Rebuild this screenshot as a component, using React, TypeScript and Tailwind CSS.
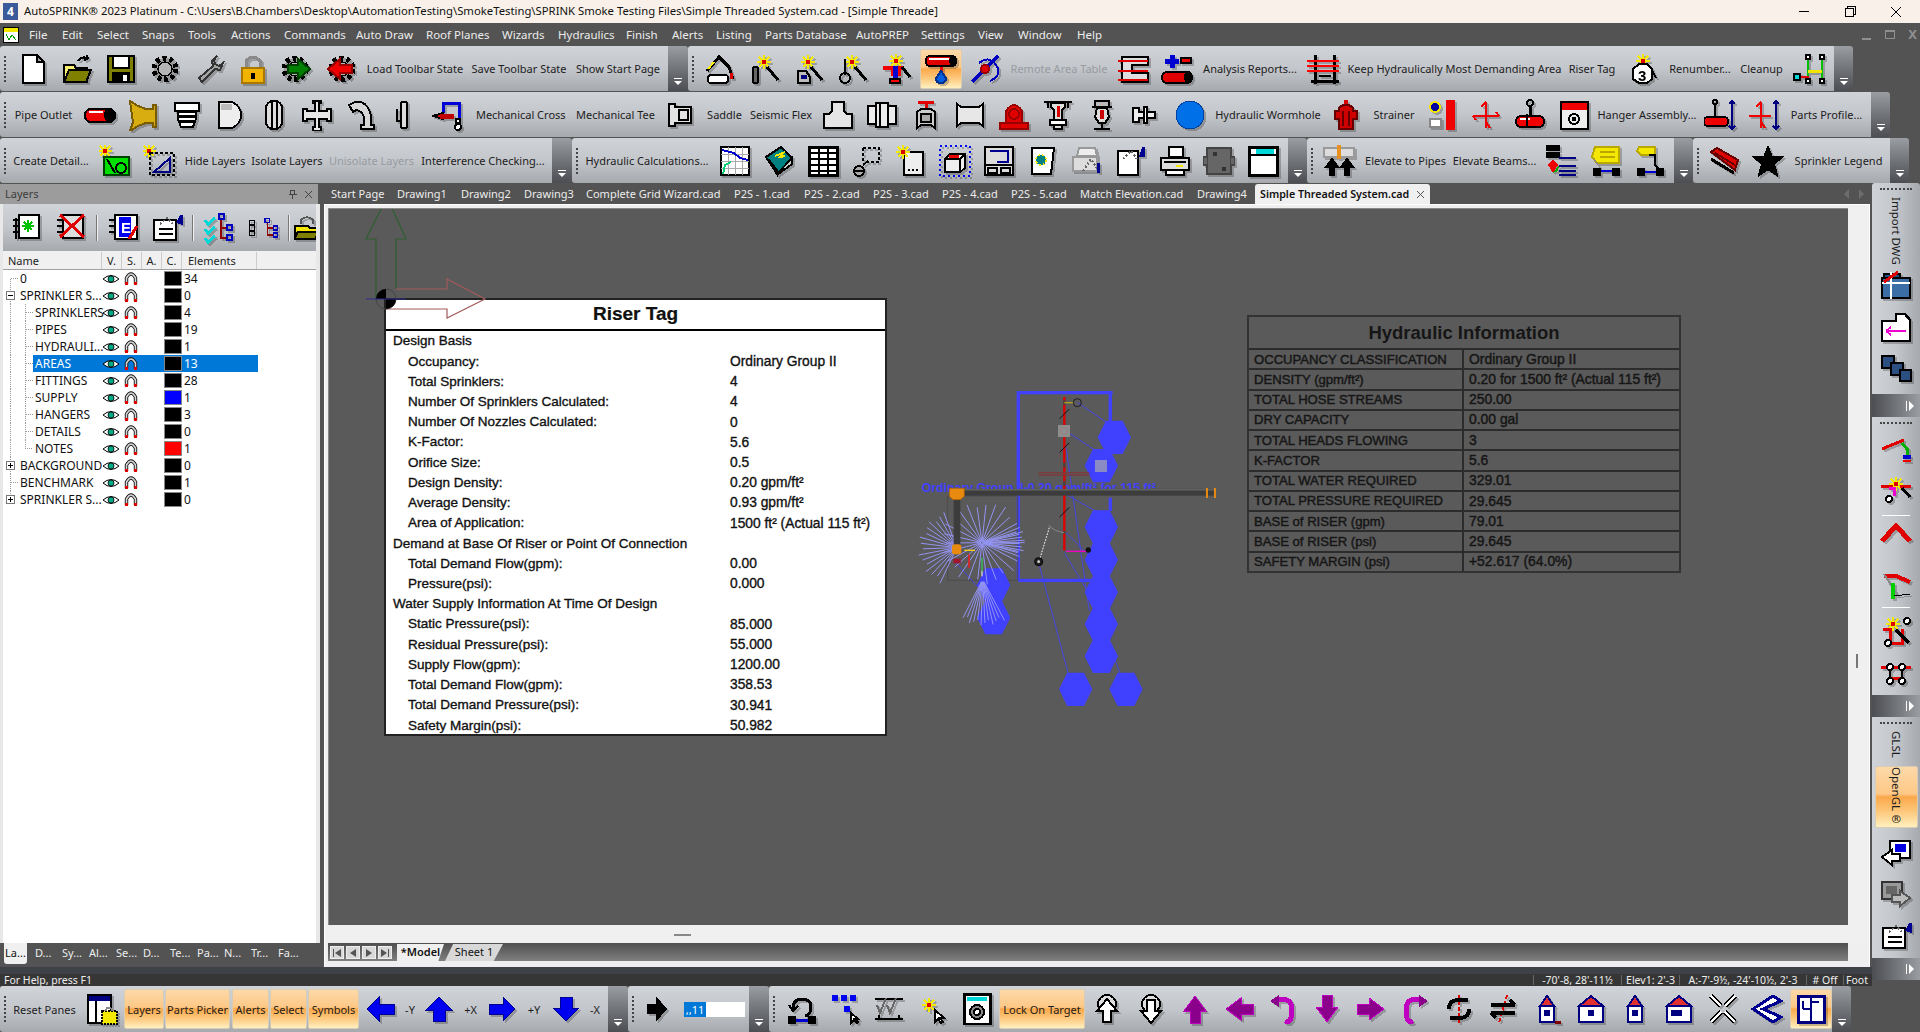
import type { ReactNode } from "react";
import clsx from "clsx";

const S = ({ c, children }: { c?: string; children: ReactNode }) => (
  <svg viewBox="0 0 32 32" width="32" height="32" fill="none" stroke="#000" strokeWidth="2" shapeRendering="crispEdges" className={clsx("drop-shadow-[2px_2px_0_rgba(0,0,0,0.22)]", c)}>
    {children}
  </svg>
);

const gear = (
  <>
    <circle cx="14" cy="16" r="11" fill="#9a9a9a" stroke="#000" strokeWidth="5" strokeDasharray="4 3" />
    <circle cx="14" cy="16" r="7" fill="#b5b5b5" stroke="#000" strokeWidth="1.5" />
  </>
);
const spark = (x: number, y: number) => (
  <g stroke="#f5ea00" strokeWidth="2">
    <path d={`M${x - 7} ${y}h14M${x} ${y - 7}v14M${x - 5} ${y - 5}l10 10M${x + 5} ${y - 5}l-10 10`} />
    <rect x={x - 2} y={y - 2} width="4" height="4" fill="#d00" stroke="none" />
  </g>
);
const pipe = (y = 20, x = 4, w = 26) => (
  <>
    <rect x={x} y={y} width={w} height="10" rx="4" fill="#e00000" />
    <path d={`M${x + 3} ${y + 3}h${w - 10}`} stroke="#fff" strokeWidth="2" />
    <ellipse cx={x + w - 3} cy={y + 5} rx="3" ry="4" fill="#000" />
  </>
);
const house = (roof: string, wide: boolean, foot?: boolean) => (
  <>
    <path d={wide ? "M4 13L16 3l12 10v16H4z" : "M9 13l7-10 7 10v16H9z"} fill="#fff" stroke="#000080" />
    <path d={wide ? "M4 13L16 3l12 10z" : "M9 13l7-10 7 10z"} fill={roof} stroke="#000080" />
    <rect x="13" y="17" width="6" height="6" fill="#000080" stroke="none" />
    {foot && <path d="M24 29h6" stroke="#800000" strokeWidth="3" />}
  </>
);

const icons: Record<string, ReactNode> = {
  doc: <path d="M6 2h14l7 7v21H6zM20 2v7h7" fill="#fff" />,
  open: (<><path d="M3 12h10l2 3h11v14H3z" fill="#f7ef70" /><path d="M3 29l5-12h22l-5 12z" fill="#808000" /><path d="M17 8q5-6 10-2m0 0l-1-4m1 4l-4 1" /></>),
  save: (<><rect x="3" y="3" width="26" height="26" fill="#808000" /><rect x="8" y="3" width="16" height="12" fill="#fff" /><rect x="8" y="20" width="16" height="9" fill="#000" /><rect x="18" y="22" width="4" height="6" fill="#fff" stroke="none" /></>),
  gear: <g transform="translate(2 0)">{gear}</g>,
  wrench: <path d="M24 3l-5 5 1 5L6 25l3 4 13-13 5 1 3-7-4 3-4-2-1-4z" fill="#a5a5a5" stroke="#333" />,
  lock: (<><path d="M9 15V8q7-8 14 0v7" stroke="#8a8a8a" strokeWidth="3" /><rect x="5" y="15" width="22" height="15" fill="#f2b400" stroke="#a87800" /><rect x="14" y="20" width="4" height="6" fill="#000" stroke="none" /></>),
  gearGreen: (<><g transform="translate(0 0)">{gear}</g><path d="M7 12h10V6l12 10-12 10v-6H7z" fill="#008000" stroke="#004000" /></>),
  gearRed: (<><g transform="translate(3 0)">{gear}</g><path d="M27 12H15V6L3 16l12 10v-6h12z" fill="#f00000" stroke="#900" /></>),
  arch: (<><path d="M2 18L14 4l10 10 4 12" stroke="#000" strokeWidth="3" /><path d="M3 16l6-7" stroke="#fff200" /><rect x="3" y="22" width="20" height="8" rx="3" fill="#fff" /><path d="M26 20v6" stroke="#d00" strokeWidth="3" /></>),
  wizA: (<>{spark(15, 9)}<rect x="4" y="14" width="5" height="16" rx="2" fill="#666" /><path d="M18 14l11 13" strokeWidth="3" /></>),
  wizB: (<>{spark(15, 9)}<path d="M5 18h8l4 6v6H5z" fill="#bbb" /><rect x="8" y="22" width="6" height="4" fill="#000080" stroke="none" /><path d="M18 14l11 13" strokeWidth="3" /></>),
  wizC: (<>{spark(15, 9)}<path d="M8 6v16" /><circle cx="8" cy="25" r="5" /><path d="M18 14l11 13" strokeWidth="3" /></>),
  wizD: (<>{spark(15, 8)}<path d="M2 15h10v6h6v-6h4" stroke="#f00000" strokeWidth="4" /><path d="M14 13v12" stroke="#0000d0" strokeWidth="5" /><rect x="9" y="26" width="10" height="4" fill="#f00" /><path d="M21 14l8 10" strokeWidth="3" /></>),
  pipeDrop: (<>{pipe(3, 1, 30)}<path d="M16 14v5" stroke="#e00" strokeWidth="3" /><path d="M16 18l5 7q0 5-5 5t-5-5z" fill="#0060e0" stroke="#003090" /></>),
  ringBlue: (<><path d="M3 29L29 3" stroke="#0000c0" strokeWidth="3" /><path d="M10 10q10-8 17 2t-6 16" stroke="#0000c0" strokeWidth="2" /><circle cx="16" cy="16" r="4" fill="#e00000" stroke="#900" /></>),
  areaTable: (<><path d="M5 4h26v8H15v8h16v9H5z" fill="#ddd" /><path d="M1 8h30M1 18h30M1 27h30" stroke="#e00000" strokeWidth="2" /></>),
  plusPipe: (<><path d="M4 8h14M11 2v13" stroke="#0000d0" strokeWidth="5" /><rect x="20" y="5" width="10" height="5" fill="#e00" /><rect x="1" y="19" width="30" height="11" rx="5" fill="#e00000" /><ellipse cx="27" cy="24" rx="3" ry="5" fill="#000" /></>),
  keep: (<><path d="M8 2v29M27 2v29M4 28h28" strokeWidth="3" /><path d="M0 8h32M0 13h32M0 18h32" stroke="#f00" strokeWidth="2" /><path d="M12 23h12" /></>),
  renum: (<>{spark(17, 8)}<path d="M7 16l6-5h8l5 5v10l-5 4h-8l-6-4z" fill="#fff" /><text x="12" y="28" fontSize="15" fontWeight="700" fill="#000" stroke="none" fontFamily="Liberation Sans">3</text><path d="M24 13l6 12" /></>),
  net: (<><path d="M15 3v26M29 3v26" stroke="#00c000" /><path d="M15 18h14" stroke="#f2e600" strokeWidth="3" /><path d="M4 24h12" stroke="#e00000" strokeWidth="2" /><rect x="1" y="21" width="6" height="6" fill="#00d8d8" /><rect x="13" y="2" width="4" height="4" fill="#fff" /><rect x="27" y="2" width="4" height="4" fill="#fff" /><rect x="13" y="26" width="4" height="4" fill="#fff" /><rect x="27" y="26" width="4" height="4" fill="#fff" /></>),
  redPipe: (<><rect x="1" y="10" width="30" height="13" rx="6" fill="#f00000" /><path d="M5 13h14" stroke="#fff" /><ellipse cx="25" cy="16" rx="4" ry="6" fill="#000" /></>),
  yellowFit: <path d="M3 2l8 5 8 3h7V6h3v22h-3v-4h-7l-8 3-8 5 3-9-1-7z" fill="#d8ad10" stroke="#7a5c00" />,
  plug: (<><path d="M4 4h24v8h-3v8l-3 8H10l-3-8v-8H4z" fill="#fff" /><path d="M7 12h18M7 17h18M9 22h14" strokeWidth="3" /></>),
  cap: (<><path d="M5 3h13q9 4 9 13t-9 13H5z" fill="#eee" /><rect x="7" y="5" width="11" height="6" fill="#bbb" stroke="none" /></>),
  coupling: (<><rect x="8" y="2" width="16" height="28" rx="7" fill="#ddd" /><path d="M14 3v26M19 3v26" /></>),
  cross: <path d="M12 2h8v2h-2v8h8v-2h4v12h-4v-2h-8v8h2v4h-8v-4h2v-8H6v2H2V10h4v2h8V4h-2z" fill="#e8e8e8" />,
  elbow: <path d="M4 6l6-3h6q8 3 10 14v9h3v4H16v-4h3v-8q-2-6-8-7l-3 2z" fill="#d6d6d6" />,
  flange: (<><rect x="13" y="3" width="6" height="26" rx="2" fill="#ddd" /><path d="M9 10v12h4" fill="#aaa" /></>),
  hangBlue: (<><path d="M11 14V4h16v16" stroke="#0000d8" strokeWidth="3" /><path d="M1 17l10-3v6z" fill="#e00000" /><rect x="8" y="15" width="14" height="5" fill="#c00000" stroke="none" /><rect x="24" y="20" width="4" height="4" fill="#fff" /><circle cx="26" cy="28" r="3" fill="#fff" /></>),
  socket: <path d="M4 5h6v3h16v16H10v3H4zM14 11h9v10h-9z" fill="#e3e3e3" />,
  tee: <path d="M10 3h12v9l3 3h5v14H2V15h5l3-3z" fill="#e5e5e5" />,
  union: <path d="M2 7h8V4h12v3h8v18h-8v3H10v-3H2zM10 7v18M22 7v18M14 4v24" fill="#ececec" />,
  valve: (<><path d="M8 3h16M16 3v7" stroke="#e00000" strokeWidth="3" /><path d="M7 13l4-3h10l4 3v16l-4-3H11l-4 3z" fill="#ccc" /><rect x="11" y="15" width="10" height="8" fill="#aaa" /></>),
  nipple: <path d="M3 5l4 3h18l4-3v22l-4-3H7l-4 3z" fill="#e7e7e7" />,
  pump: (<><path d="M8 24V12q8-12 16 0v12z" fill="#e00000" stroke="#900" /><circle cx="16" cy="15" r="5" stroke="#900" /><rect x="2" y="24" width="28" height="6" fill="#e00000" stroke="#900" /></>),
  spr1: (<><path d="M2 3h28M6 3v6M26 3v6" /><path d="M9 4h14v4l-3 3v10h-8V11L9 8z" fill="#ddd" /><rect x="15" y="7" width="3" height="11" fill="#d00" stroke="none" /><rect x="8" y="21" width="16" height="5" fill="#fff" /><path d="M12 26h8v4h-8z" fill="#ddd" /></>),
  spr2: (<><rect x="9" y="2" width="14" height="6" fill="#bbb" /><path d="M6 8h20M11 9l-2 9 4 6h6l4-6-2-9z" fill="#ddd" /><rect x="14" y="11" width="4" height="9" fill="#c00" stroke="none" /><path d="M16 24v5M8 30h16" /></>),
  tap: (<><path d="M3 9v14h6v-4h16v-6H9V9z" fill="#eee" /><path d="M14 8v16h3V8z" fill="#fff" /></>),
  ball: <circle cx="16" cy="16" r="14" fill="#0070e8" stroke="#0040a0" strokeWidth="1" />,
  hydrant: (<><rect x="14" y="1" width="4" height="4" fill="#d00" stroke="none" /><path d="M9 9q7-7 14 0v3h4v8h-4v10H9V20H5v-8h4z" fill="#d00000" stroke="#600" /><path d="M12 12h2v15h-2zM18 12h2v15h-2z" fill="#600" stroke="none" /></>),
  strainer: (<><rect x="20" y="1" width="9" height="30" fill="#f00000" stroke="none" /><circle cx="9" cy="8" r="5" fill="#0000a0" stroke="#f2e600" /><path d="M4 20h11v8H4z" fill="#fff" stroke="#888" /></>),
  redCross: <path d="M16 3v26M3 17h26M11 8l5-5M20 29l-4-6M6 21l-3-4M26 13l3 4" stroke="#f00000" strokeWidth="2" />,
  hanger: (<><circle cx="16" cy="4" r="3" /><path d="M16 7v13" strokeWidth="3" /><rect x="2" y="17" width="28" height="11" rx="5" fill="#f00000" /><path d="M6 20h10" stroke="#fff" /><path d="M13 15v14" /></>),
  boxRed: (<><rect x="3" y="3" width="27" height="27" fill="#eee" /><rect x="4" y="4" width="25" height="7" fill="#f00000" stroke="none" /><circle cx="16" cy="20" r="5" /><rect x="15" y="19" width="2" height="2" fill="#000" /></>),
  hanger2: (<><circle cx="11" cy="3" r="2" /><path d="M11 4v14" strokeWidth="2" /><rect x="0" y="18" width="24" height="9" rx="4" fill="#f00000" /><path d="M28 2v28M25 5l3-3 3 3M25 27l3 3 3-3" stroke="#000080" /></>),
  redCross2: (<><path d="M13 3v26M1 17h22M8 8l5-5M17 29l-4-6" stroke="#f00000" /><path d="M28 2v28M25 5l3-3 3 3M25 27l3 3 3-3" stroke="#000080" /></>),
  detGreen: (<>{spark(6, 6)}<rect x="5" y="12" width="25" height="18" fill="#00e000" stroke="#004000" /><path d="M8 14l8 14" /><circle cx="22" cy="23" r="5" /></>),
  detTri: (<>{spark(6, 6)}<rect x="7" y="8" width="24" height="22" strokeDasharray="3 2" /><path d="M11 27l16-14v14z" stroke="#000080" /></>),
  chart: (<><rect x="2" y="2" width="28" height="28" fill="#fff" /><path d="M2 9h28M2 16h28M2 23h28M9 2v28M16 2v28M23 2v28" stroke="#aaa" strokeWidth="1" /><path d="M3 5l12 3 6 5 8 2" stroke="#0000d0" /><path d="M4 29l2-9 6-3" stroke="#00d070" /></>),
  book: (<><path d="M3 12L18 2l11 11-15 16z" fill="#008080" /><path d="M3 12l11 17v-4L5 14" fill="#fff" /><path d="M12 11l8-3-3 4 5-1" stroke="#f5e800" /><path d="M14 29l15-16v6L14 30" fill="#ccc" /></>),
  grid: (<><rect x="2" y="2" width="28" height="28" fill="#fff" strokeWidth="3" /><path d="M2 8h28M2 14h28M2 20h28M2 26h28M12 2v28M21 2v28" strokeWidth="2" /></>),
  lasso: (<><path d="M12 3h16v14H16M12 3v15" strokeDasharray="3 2" /><circle cx="8" cy="26" r="5" fill="#aaa" /><path d="M3 26h10M12 20l5-4" /></>),
  sparkDoc: (<><rect x="9" y="7" width="19" height="23" fill="#eee" /><path d="M13 25h10" strokeDasharray="2 2" />{spark(8, 7)}</>),
  boxDot: (<><rect x="1" y="1" width="30" height="30" stroke="#0000f0" strokeDasharray="2 3" /><path d="M6 14l5-5h15v14l-5 4H6z" fill="#eee" /><path d="M6 14h15v13M21 14l5-5" /><rect x="10" y="10" width="10" height="3" fill="#e00" stroke="none" /></>),
  panel: (<><rect x="2" y="2" width="28" height="28" fill="#ddd" /><path d="M7 6h18v11H14" stroke="#000090" /><path d="M2 20h28" /><rect x="5" y="23" width="9" height="5" /><rect x="18" y="23" width="9" height="5" /></>),
  page: (<><path d="M5 3h22l-3 26H5z" fill="#fff" /><circle cx="14" cy="15" r="5" fill="#008080" stroke="#f5e800" strokeDasharray="2 2" /></>),
  ghost: (<><path d="M8 3h16l2 8H6z" fill="#eee" stroke="#999" /><path d="M2 12h24v14H2z" fill="#ddd" stroke="#999" /><path d="M12 26l8-12 8 12" stroke="#666" strokeDasharray="2 2" /><rect x="26" y="18" width="3" height="10" fill="#000090" stroke="none" /></>),
  docPen: (<><path d="M3 6h20v24H3z" fill="#fff" /><path d="M8 14l8-8 6 8" stroke="#666" strokeDasharray="2 2" /><path d="M24 12l3-10h3v10z" fill="#000090" stroke="none" /></>),
  printer: (<><path d="M10 2h14v10H10z" fill="#fff" /><path d="M2 13h28v12H2z" fill="#ddd" /><path d="M7 25h18v5H7z" fill="#fff" /><rect x="17" y="20" width="7" height="2" fill="#f5e800" stroke="none" /><path d="M5 17h22" /></>),
  block: (<><path d="M4 3h24v26H4z" fill="#666" stroke="#444" /><path d="M4 12H0v8h4M28 12h4v8h-4" fill="#666" stroke="#444" /><rect x="10" y="7" width="4" height="4" fill="#333" stroke="none" /><rect x="19" y="22" width="4" height="4" fill="#333" stroke="none" /></>),
  win: (<><rect x="2" y="2" width="28" height="28" fill="#fff" strokeWidth="3" /><rect x="9" y="4" width="18" height="5" fill="#00d8d8" stroke="none" /><path d="M2 10h28" /></>),
  elevUp: (<><rect x="1" y="3" width="30" height="9" fill="#ddd" stroke="#999" /><rect x="14" y="0" width="4" height="14" fill="#e89020" stroke="none" /><path d="M9 14l-6 8h4v8h4v-8h4zM24 14l-6 8h4v8h4v-8h4z" fill="#000" /></>),
  colors: (<><rect x="2" y="1" width="12" height="4" fill="#000" /><rect x="2" y="8" width="12" height="4" fill="#000" /><path d="M8 14l5 6-5 8-5-8z" fill="#e00" stroke="none" /><path d="M8 28l6-8-1 6z" fill="#00b000" stroke="none" /><path d="M14 13h17M14 21h17M14 26h17M14 30h17" stroke="#000080" /></>),
  tagY: (<><path d="M6 2h24v16H8l-5-6z" fill="#f5e800" stroke="#b8a800" /><path d="M11 7h15M11 12h15" stroke="#b8a800" /><path d="M5 14l9 13" stroke="#888" strokeWidth="1" /><path d="M8 26h18" stroke="#0000d0" /><rect x="5" y="24" width="6" height="6" fill="#000" /><rect x="24" y="24" width="6" height="6" fill="#000" /></>),
  tagS: (<><path d="M6 2h16v8H8l-4-4z" fill="#f5e800" stroke="#b8a800" /><path d="M16 10h6v10l5 5" /><path d="M12 27h14" stroke="#0000d0" /><rect x="5" y="24" width="6" height="6" fill="#000" /><rect x="24" y="24" width="6" height="6" fill="#000" /></>),
  beam: (<><path d="M3 7l6-4 21 12-3 10z" fill="#e00000" stroke="#600" /><path d="M3 14L26 28" strokeWidth="3" /><path d="M7 8l20 12" stroke="#600" /></>),
  star: <path d="M16 2l4 10h10l-8 7 3 11-9-6-9 6 3-11-8-7h10z" fill="#000" />,
  arL: <path d="M14 4v7h15v10H14v7L2 16z" fill="#0000f0" stroke="#000090" strokeWidth="1" />,
  arU: <path d="M16 4l13 13h-7v11H10V17H3z" fill="#0000f0" stroke="#000090" strokeWidth="1" />,
  arR: <path d="M17 4v7H3v10h14v7l12-12z" fill="#0000f0" stroke="#000090" strokeWidth="1" />,
  arD: <path d="M16 28L3 15h7V4h12v11h7z" fill="#0000f0" stroke="#000090" strokeWidth="1" />,
  arB: <path d="M16 6v6H7v8h9v6l9-10z" fill="#000" />,
  reset: (<><rect x="2" y="2" width="23" height="28" fill="#fff" /><rect x="3" y="3" width="21" height="5" fill="#000080" stroke="none" /><path d="M10 8v22" /><rect x="16" y="18" width="15" height="13" fill="#f5e800" strokeDasharray="2 1" /><path d="M19 18q4-7 8 0" stroke="#888" /></>),
  undoH: (<><path d="M8 16q0-10 9-10t9 8-6 9" strokeWidth="3" /><path d="M4 12l4 6 5-5" strokeWidth="2" /><path d="M8 27h18" stroke="#0000d0" strokeWidth="3" /><rect x="4" y="24" width="6" height="6" fill="#000" /><rect x="24" y="24" width="6" height="6" fill="#000" /></>),
  dots: (<><path d="M3 2h6v6H3zM12 2h6v6h-6zM21 2h6v6h-6zM15 13h6v6h-6z" fill="#0000f0" stroke="none" /><path d="M22 20v10l3-3 3 3 1-1-3-3h3z" fill="#fff" /></>),
  checks: (<><path d="M2 6h28M2 26h28M6 26v-4M26 26v-4" /><path d="M4 12l3 8 6-15M14 12l3 8 6-15" stroke="#666" /></>),
  sparkPtr: (<>{spark(12, 12)}<path d="M18 17v12l3-3 3 4 2-1-3-4h4z" fill="#fff" /></>),
  winRing: (<><rect x="3" y="1" width="26" height="30" fill="#fff" strokeWidth="3" /><rect x="6" y="4" width="20" height="4" fill="#00d8d8" stroke="none" /><circle cx="16" cy="19" r="7" fill="#888" /><circle cx="16" cy="19" r="3" fill="#fff" /></>),
  zoomUp: (<><circle cx="16" cy="11" r="9" fill="#ddd" /><path d="M16 6l-10 12h6v11h8V18h6z" fill="#fff" /></>),
  zoomDn: (<><circle cx="16" cy="11" r="9" fill="#ddd" /><path d="M16 30L6 18h6V7h8v11h6z" fill="#fff" /></>),
  pU: <path d="M16 3l11 15h-6v12H11V18H5z" fill="#8a008a" stroke="#c000c0" strokeWidth="1" />,
  pL: <path d="M3 16l15-11v6h12v10H18v6z" fill="#8a008a" stroke="#c000c0" strokeWidth="1" />,
  pD: <path d="M16 29L5 14h6V2h10v12h6z" fill="#8a008a" stroke="#c000c0" strokeWidth="1" />,
  pR: <path d="M29 16L14 5v6H2v10h12v6z" fill="#8a008a" stroke="#c000c0" strokeWidth="1" />,
  pUndo: (<><path d="M9 7q16-4 16 10t-7 11" stroke="#c000c0" strokeWidth="5" /><path d="M3 8l9-6v12z" fill="#8a008a" stroke="none" /></>),
  pRedo: (<><path d="M23 7Q7 3 7 17t7 11" stroke="#c000c0" strokeWidth="5" /><path d="M29 8l-9-6v12z" fill="#8a008a" stroke="none" /></>),
  rotA: (<><path d="M16 2v28" stroke="#e00000" strokeWidth="2" strokeDasharray="4 2" /><path d="M6 16q0-9 10-9h9M26 16q0 9-10 9H7" strokeWidth="4" /></>),
  rotB: (<><path d="M20 2L12 30" stroke="#e00000" strokeWidth="2" strokeDasharray="4 2" /><path d="M4 12h24M28 12l-5-5M4 20h24M4 20l5 5" strokeWidth="4" /></>),
  hA: <g>{house("#e03030", false, true)}</g>,
  hB: <g>{house("#e03030", true)}</g>,
  hC: <g>{house("#e03030", false)}</g>,
  hD: (<>{house("#e03030", true)}<rect x="8" y="17" width="5" height="6" fill="#000080" stroke="none" /></>),
  fit: (<><path d="M4 3l10 10M28 3L18 13M4 29l10-10M28 29L18 19" stroke="#000" strokeWidth="5" /><path d="M4 3l10 10M28 3L18 13M4 29l10-10M28 29L18 19" stroke="#fff" strokeWidth="2" /></>),
  diamond: (<><path d="M2 16L22 3l8 5-18 8 18 8-8 5z" fill="#fff" stroke="#000090" strokeWidth="3" /></>),
  sheets: (<><rect x="3" y="3" width="26" height="26" fill="#fff" stroke="#000080" strokeWidth="3" /><path d="M16 3v26M8 16h8M16 9h8M8 8v8" stroke="#000080" strokeWidth="2" /></>),
  vBlue: (<><path d="M4 4h16v5H4z" fill="#205080" /><path d="M2 8h28v20H2z" fill="#3a6ea5" /><path d="M2 13h28M11 2v27" stroke="#fff" /><path d="M4 12L18 2" stroke="#e00000" strokeWidth="3" /></>),
  vDocs: (<><path d="M2 10h14V3h9l5 6v21H2z" fill="#fff" strokeWidth="2.5" /><path d="M6 20h20M6 20l5-4M6 20l5 4" stroke="#f000d0" /></>),
  vLink: (<><rect x="2" y="4" width="12" height="12" fill="#2a4f80" /><rect x="11" y="11" width="12" height="12" fill="#2a4f80" /><rect x="20" y="18" width="11" height="11" fill="#2a4f80" /></>),
  vRoof: (<><path d="M2 16l12-5 10-4" stroke="#e00000" strokeWidth="3" /><path d="M22 10l5 6v8" stroke="#00b000" strokeWidth="3" /><rect x="23" y="22" width="8" height="4" fill="#0000d0" stroke="none" /><path d="M23 28h8" stroke="#e00" /></>),
  vRoofW: (<>{spark(16, 10)}<path d="M1 12h12M20 12h11" stroke="#e00000" strokeWidth="3" /><path d="M9 14h5v8" stroke="#f000d0" strokeWidth="3" /><circle cx="9" cy="25" r="3" fill="#fff" /><path d="M22 14l8 9" strokeWidth="3" /></>),
  vPeak: <path d="M2 24L16 9l14 15" stroke="#e00000" strokeWidth="5" />,
  vPeak2: (<><path d="M4 7h12l14 6" stroke="#e00000" strokeWidth="4" /><path d="M4 5l14 22" stroke="#888" /><path d="M13 14v16" stroke="#00d000" strokeWidth="4" /><path d="M14 27l16-2" strokeWidth="1" /></>),
  vWiz: (<>{spark(13, 8)}<path d="M3 13h7v14h12V13" stroke="#e00000" strokeWidth="3" /><circle cx="8" cy="27" r="3" fill="#fff" /><circle cx="27" cy="5" r="3" fill="#fff" /><path d="M16 14l13 13" strokeWidth="3" /></>),
  vLoop: (<><path d="M1 10h30M10 21h12" stroke="#e00000" strokeWidth="3" /><path d="M10 6v20M22 6v20" strokeWidth="2" /><circle cx="10" cy="10" r="3" fill="#fff" /><circle cx="22" cy="10" r="3" fill="#fff" /><circle cx="10" cy="24" r="3" fill="#fff" /><circle cx="22" cy="24" r="3" fill="#fff" /></>),
  vMon: (<><rect x="10" y="3" width="20" height="17" fill="#fff" /><rect x="15" y="6" width="11" height="8" fill="#0000e0" stroke="none" /><path d="M2 19l10-7v4h8v7h-8v4z" fill="#fff" /></>),
  vMonG: (<><rect x="2" y="3" width="20" height="17" fill="#999" stroke="#333" /><rect x="6" y="7" width="11" height="8" fill="#666" stroke="none" /><path d="M30 19l-10-7v4h-8v7h8v4z" fill="#bbb" stroke="#555" /></>),
  layNew: (<><path d="M8 3h20v23H8z" fill="#fff" /><path d="M5 6v21M2 8h6M2 14h6M2 20h6" /><path d="M17 8v12M11 14h12M13 10l8 8M21 10l-8 8" stroke="#00c000" /></>),
  layDel: (<><path d="M8 3h20v23H8z" fill="#ddd" /><path d="M2 8h6M2 14h6M2 20h6" /><path d="M5 3l24 22M29 3L5 25" stroke="#e00000" strokeWidth="3" /></>),
  layE: (<><path d="M8 3h22v24H8z" fill="#fff" /><path d="M2 8h6M2 14h6M2 20h6" /><rect x="12" y="5" width="12" height="20" fill="#0000f0" stroke="none" /><path d="M22 27L30 14" stroke="#e00000" strokeWidth="3" /><text x="14" y="21" fontSize="15" fontWeight="700" fill="#fff" stroke="none" fontFamily="Liberation Sans">E</text></>),
  layDoc: (<><path d="M3 8h22v20H3z" fill="#fff" /><path d="M9 12l7-6 6 6" stroke="#666" strokeDasharray="2 2" /><path d="M8 17h14M8 22h14" /><path d="M25 11l4-8h3v10z" fill="#000090" stroke="none" /></>),
  layChk: (<><path d="M2 8l3 4 7-6M2 17l3 4 7-6M2 26l3 4 7-6" stroke="#00d8d8" strokeWidth="3" /><path d="M18 6v20h6M18 16h6" stroke="#900000" /><rect x="16" y="2" width="5" height="5" stroke="#0000c0" /><rect x="24" y="13" width="5" height="5" stroke="#0000c0" /><rect x="24" y="23" width="5" height="5" stroke="#0000c0" /></>),
  layBox: (<><rect x="12" y="2" width="8" height="8" strokeWidth="2" /><rect x="12" y="12" width="8" height="8" strokeWidth="2" /><rect x="12" y="22" width="8" height="8" strokeWidth="2" /></>),
  layTree: (<><rect x="6" y="2" width="6" height="6" stroke="#0000c0" /><path d="M9 8v18h9M9 16h9" stroke="#900000" /><rect x="18" y="13" width="6" height="6" stroke="#0000c0" /><rect x="18" y="23" width="6" height="6" stroke="#0000c0" /></>),
  layOpen: (<><path d="M10 12V7q6-5 12 0v5" stroke="#555" /><path d="M3 14h14l2 2h8v12H3z" fill="#f5e800" /><path d="M6 20l-3 8h22l3-8z" fill="#808000" /></>),
};

const Ic = ({ n, w = "w-[44px]" }: { n: string; w?: string }) => (
  <div className={clsx("flex shrink-0 items-center justify-center", w)}>
    <S>{icons[n]}</S>
  </div>
);
const Tx = ({ w, off, children }: { w: string; off?: boolean; children: ReactNode }) => (
  <div className={clsx("shrink-0 whitespace-nowrap text-center text-[11px] leading-none", w, off ? "text-[#989ba0]" : "text-[#1c1c1c]")}>{children}</div>
);
const hlBg = "bg-[linear-gradient(#fdd9a8_0%,#fdc887_45%,#fba84a_50%,#fdc97e_75%,#fff0bf_100%)] border border-[#d8cdb4] rounded-[2px]";
const Hl = ({ w, children }: { w: string; children: ReactNode }) => (
  <div className={clsx("flex h-[40px] shrink-0 items-center justify-center whitespace-nowrap text-[11px] leading-none text-[#1c1c1c]", w, hlBg)}>{children}</div>
);
const Dots = ({ w }: { w: string }) => (
  <div className={clsx("flex h-full shrink-0 items-center pl-[4px]", w)}>
    <div className="h-[26px] border-l-2 border-dotted border-[#444]" />
  </div>
);
const Grip = ({ w = "w-[19px]" }: { w?: string }) => (
  <div className={clsx("relative flex shrink-0 flex-col items-center justify-end rounded-r-[3px] bg-linear-to-b from-[#9a9da2] to-[#4c4e53] pb-[6px]", w)}>
    <div className="mb-[2px] h-px w-[8px] bg-white" />
    <div className="h-0 w-0 border-x-[4px] border-t-[4px] border-x-transparent border-t-white" />
  </div>
);
const VGrip = ({ h }: { h: string }) => (
  <div className={clsx("flex items-center justify-end gap-[2px] bg-linear-to-r from-[#4c4e53] to-[#9a9da2] pr-[6px]", h)}>
    <div className="h-[10px] w-px bg-white" />
    <div className="h-0 w-0 border-y-[5px] border-l-[5px] border-y-transparent border-l-white" />
  </div>
);
const barBg = "bg-linear-to-b from-[#d0d3d8] via-[#c3c6cb] to-[#a6a9ae]";
const vBarBg = "bg-linear-to-r from-[#d0d3d8] via-[#c3c6cb] to-[#a6a9ae]";
const Seg = ({ w, lead, grip, children }: { w: string; lead: string; grip?: string; children: ReactNode }) => (
  <div className={clsx("flex h-full shrink-0", w)}>
    <div className={clsx("flex min-w-0 flex-1 items-center overflow-hidden rounded-l-[3px]", barBg)}>
      <Dots w={lead} />
      {children}
    </div>
    <Grip w={grip} />
  </div>
);

const menu = [
  ["File", "w-[33px]"], ["Edit", "w-[35px]"], ["Select", "w-[45px]"], ["Snaps", "w-[46px]"], ["Tools", "w-[43px]"],
  ["Actions", "w-[53px]"], ["Commands", "w-[72px]"], ["Auto Draw", "w-[70px]"], ["Roof Planes", "w-[76px]"], ["Wizards", "w-[56px]"],
  ["Hydraulics", "w-[68px]"], ["Finish", "w-[46px]"], ["Alerts", "w-[44px]"], ["Listing", "w-[49px]"], ["Parts Database", "w-[91px]"],
  ["AutoPREP", "w-[65px]"], ["Settings", "w-[57px]"], ["View", "w-[40px]"], ["Window", "w-[59px]"], ["Help", "w-[40px]"],
];
const docTabs = [
  ["Start Page", "w-[66px]"], ["Drawing1", "w-[64px]"], ["Drawing2", "w-[63px]"], ["Drawing3", "w-[62px]"], ["Complete Grid Wizard.cad", "w-[148px]"],
  ["P2S - 1.cad", "w-[70px]"], ["P2S - 2.cad", "w-[69px]"], ["P2S - 3.cad", "w-[69px]"], ["P2S - 4.cad", "w-[69px]"], ["P2S - 5.cad", "w-[69px]"],
  ["Match Elevation.cad", "w-[117px]"], ["Drawing4", "w-[58px]"],
];
const layers = [
  { name: "0", n: 34, c: "bg-black", t: "first" },
  { name: "SPRINKLER S...", n: 0, c: "bg-black", t: "minus" },
  { name: "SPRINKLERS", n: 4, c: "bg-black", t: "child" },
  { name: "PIPES", n: 19, c: "bg-black", t: "child" },
  { name: "HYDRAULI...", n: 1, c: "bg-black", t: "child" },
  { name: "AREAS", n: 13, c: "bg-black", t: "child", sel: true },
  { name: "FITTINGS", n: 28, c: "bg-black", t: "child" },
  { name: "SUPPLY", n: 1, c: "bg-[#0000ff]", t: "child" },
  { name: "HANGERS", n: 3, c: "bg-black", t: "child" },
  { name: "DETAILS", n: 0, c: "bg-black", t: "child" },
  { name: "NOTES", n: 1, c: "bg-[#ff0000]", t: "last" },
  { name: "BACKGROUND", n: 0, c: "bg-black", t: "plus" },
  { name: "BENCHMARK", n: 1, c: "bg-black", t: "root" },
  { name: "SPRINKLER S...", n: 0, c: "bg-black", t: "end" },
];
const riser: [string, string?][] = [
  ["Design Basis"],
  ["Occupancy:", "Ordinary Group II"],
  ["Total Sprinklers:", "4"],
  ["Number Of Sprinklers Calculated:", "4"],
  ["Number Of Nozzles Calculated:", "0"],
  ["K-Factor:", "5.6"],
  ["Orifice Size:", "0.5"],
  ["Design Density:", "0.20 gpm/ft²"],
  ["Average Density:", "0.93 gpm/ft²"],
  ["Area of Application:", "1500 ft² (Actual 115 ft²)"],
  ["Demand at Base Of Riser or Point Of Connection"],
  ["Total Demand Flow(gpm):", "0.00"],
  ["Pressure(psi):", "0.000"],
  ["Water Supply Information At Time Of Design"],
  ["Static Pressure(psi):", "85.000"],
  ["Residual Pressure(psi):", "55.000"],
  ["Supply Flow(gpm):", "1200.00"],
  ["Total Demand Flow(gpm):", "358.53"],
  ["Total Demand Pressure(psi):", "30.941"],
  ["Safety Margin(psi):", "50.982"],
];
const hydraulic = [
  ["OCCUPANCY CLASSIFICATION", "Ordinary Group II"],
  ["DENSITY (gpm/ft²)", "0.20 for 1500 ft² (Actual 115 ft²)"],
  ["TOTAL HOSE STREAMS", "250.00"],
  ["DRY CAPACITY", "0.00 gal"],
  ["TOTAL HEADS FLOWING", "3"],
  ["K-FACTOR", "5.6"],
  ["TOTAL WATER REQUIRED", "329.01"],
  ["TOTAL PRESSURE REQUIRED", "29.645"],
  ["BASE of RISER (gpm)", "79.01"],
  ["BASE of RISER (psi)", "29.645"],
  ["SAFETY MARGIN (psi)", "+52.617 (64.0%)"],
];
const hexes = [[640, 199], [601, 284], [601, 468], [601, 566], [601, 664], [601, 760], [601, 856], [524, 955], [675, 955], [278, 642], [278, 740]];
const ray = (cx: number, cy: number, r0: number, r: number, i: number, a: number) => {
  const t = (a * Math.PI) / 180;
  const rr = r - ((i * 37) % 22);
  return <line key={`${cx}-${i}`} x1={cx + r0 * Math.cos(t)} y1={cy + r0 * Math.sin(t)} x2={cx + rr * Math.cos(t)} y2={cy + rr * Math.sin(t)} />;
};

const TreeLines = ({ t }: { t: string }) => (
  <svg width="30" height="17" className="shrink-0" stroke="#999" strokeDasharray="1 1" fill="none" shapeRendering="crispEdges">
    {t === "first" && <path d="M7.5 8.5V17M7.5 8.5H15" />}
    {(t === "minus" || t === "plus") && <path d="M7.5 0V17" />}
    {t === "child" && <path d="M7.5 0V17M22.5 0V17M22.5 8.5H30" />}
    {t === "last" && <path d="M7.5 0V17M22.5 0V8.5H30" />}
    {t === "root" && <path d="M7.5 0V17M7.5 8.5H15" />}
    {t === "end" && <path d="M7.5 0V8" />}
    {(t === "minus" || t === "plus" || t === "end") && (
      <g strokeDasharray="none">
        <rect x="3.5" y="4.5" width="8" height="8" fill="#fff" stroke="#777" />
        <path d="M5 8.5h5" stroke="#000" />
        {t !== "minus" && <path d="M7.5 6v5" stroke="#000" />}
      </g>
    )}
  </svg>
);
const Eye = () => (
  <svg viewBox="0 0 16 10" width="16" height="10" className="shrink-0">
    <path d="M0 5q8-7 16 0q-8 7-16 0z" fill="#fff" stroke="#000" strokeWidth="1" />
    <circle cx="8" cy="5" r="3" fill="#00a884" stroke="#000" strokeWidth=".8" />
  </svg>
);
const Magnet = () => (
  <svg viewBox="0 0 14 14" width="14" height="14" fill="none" className="shrink-0">
    <path d="M2.5 12V6q4.5-8 9 0v6" stroke="#111" strokeWidth="3.4" />
    <path d="M2.5 12V6q4.5-8 9 0v6" stroke="#d4d4d4" strokeWidth="1.6" />
    <path d="M1 11.5h3M10 11.5h3" stroke="#e00000" strokeWidth="3" />
  </svg>
);
const Win = ({ children }: { children: ReactNode }) => (
  <div className="flex h-full w-[46px] items-center justify-center">{children}</div>
);
const NavBtn = ({ d }: { d: string }) => (
  <div className="flex h-[13px] w-[14px] items-center justify-center border border-[#eee] bg-[#d8d8d8]">
    <svg viewBox="0 0 8 8" width="8" height="8"><path d={d} fill="#555" /></svg>
  </div>
);
const Sep = ({ c }: { c: string }) => <div className={clsx("h-[26px] w-[2px] shrink-0 border-l border-[#777] bg-[#f0f0f0]", c)} />;

export default function App() {
  return (
    <div className="flex h-[1032px] w-[1920px] flex-col overflow-hidden bg-[#535353] font-['Noto_Sans','Liberation_Sans',sans-serif]">
      <div className="flex h-[23px] items-center bg-[#f9f1e9]">
        <div className="ml-[3px] flex h-[17px] w-[15px] items-center justify-center bg-[#3a5a9a] text-[12px] font-bold leading-none text-white">4</div>
        <div className="ml-[6px] whitespace-nowrap text-[11.3px] text-[#111]">AutoSPRINK® 2023 Platinum - C:\Users\B.Chambers\Desktop\AutomationTesting\SmokeTesting\SPRINK Smoke Testing Files\Simple Threaded System.cad - [Simple Threade]</div>
        <div className="ml-auto mr-px flex h-full">
          <Win><div className="h-px w-[10px] bg-black" /></Win>
          <Win><svg width="11" height="11" fill="none" stroke="#000" shapeRendering="crispEdges"><path d="M.5 2.5h8v8h-8zM2.5 2.5V.5h8v8H8.5" /></svg></Win>
          <Win><svg width="12" height="12" stroke="#000"><path d="M1 1l10 10M11 1L1 11" /></svg></Win>
        </div>
      </div>

      <div className="flex h-[23px] items-center text-[11.5px] text-[#ececec]">
        <div className="w-[29px] pl-[3px]">
          <svg width="16" height="16" stroke="#000" fill="#fff" shapeRendering="crispEdges"><rect x=".5" y=".5" width="15" height="15" /><rect x="1" y="1" width="14" height="4" fill="#f5e800" stroke="none" /><path d="M3 7l3 6 3-5 4 5" stroke="#00a000" fill="none" /></svg>
        </div>
        {menu.map(([t, w]) => (
          <div key={t} className={clsx("shrink-0 whitespace-nowrap", w)}>{t}</div>
        ))}
        <div className="ml-auto mr-[3px] flex w-[55px] items-center justify-between text-[#8f8f8f]">
          <div className="mt-[8px] h-[2px] w-[9px] bg-[#8f8f8f]" />
          <div className="h-[9px] w-[10px] border border-t-2 border-[#8f8f8f]" />
          <div className="text-[13px] font-bold leading-none">X</div>
        </div>
      </div>

      <div className="flex flex-col gap-px">
        <div className="flex h-[45px]">
          <Seg w="w-[688px]" lead="w-[11px]" grip="w-[20px]">
            {["doc", "open", "save", "gear", "wrench", "lock", "gearGreen", "gearRed"].map((n) => <Ic key={n} n={n} />)}
            <Tx w="w-[104px]">Load Toolbar State</Tx>
            <Tx w="w-[104px]">Save Toolbar State</Tx>
            <Tx w="w-[94px]">Show Start Page</Tx>
          </Seg>
          <Seg w="w-[1165px]" lead="w-[11px]">
            {["arch", "wizA", "wizB", "wizC", "wizD"].map((n) => <Ic key={n} n={n} />)}
            <div className={clsx("mx-px flex h-[40px] w-[42px] shrink-0 items-center justify-center", hlBg)}><S>{icons.pipeDrop}</S></div>
            <Ic n="ringBlue" />
            <Tx off w="w-[104px]">Remote Area Table</Tx>
            <Ic n="areaTable" />
            <Ic n="plusPipe" />
            <Tx w="w-[102px]">Analysis Reports...</Tx>
            <Ic n="keep" />
            <Tx w="w-[219px]">Keep Hydraulically Most Demanding Area</Tx>
            <Tx w="w-[56px]">Riser Tag</Tx>
            <Ic n="renum" />
            <Tx w="w-[72px]">Renumber...</Tx>
            <Tx w="w-[51px]">Cleanup</Tx>
            <Ic n="net" />
          </Seg>
        </div>

        <div className="flex h-[45px]">
          <Seg w="w-[1890px]" lead="w-[9px]">
            <Tx w="w-[69px]">Pipe Outlet</Tx>
            {["redPipe", "yellowFit", "plug", "cap", "coupling", "cross", "elbow", "flange", "hangBlue"].map((n) => <Ic key={n} n={n} w="w-[43.5px]" />)}
            <Tx w="w-[102.5px]">Mechanical Cross</Tx>
            <Tx w="w-[87px]">Mechanical Tee</Tx>
            <Ic n="socket" />
            <Tx w="w-[43px]">Saddle</Tx>
            <Tx w="w-[70px]">Seismic Flex</Tx>
            {["tee", "union", "valve", "nipple", "pump", "spr1", "spr2", "tap", "ball"].map((n) => <Ic key={n} n={n} />)}
            <Tx w="w-[112px]">Hydraulic Wormhole</Tx>
            <Ic n="hydrant" />
            <Tx w="w-[52px]">Strainer</Tx>
            {["strainer", "redCross", "hanger", "boxRed"].map((n) => <Ic key={n} n={n} />)}
            <Tx w="w-[102px]">Hanger Assembly...</Tx>
            <Ic n="hanger2" />
            <Ic n="redCross2" />
            <Tx w="w-[81px]">Parts Profile...</Tx>
          </Seg>
        </div>

        <div className="flex h-[45px]">
          <Seg w="w-[572px]" lead="w-[9px]" grip="w-[20px]">
            <Tx w="w-[84px]">Create Detail...</Tx>
            <Ic n="detGreen" />
            <Ic n="detTri" />
            <Tx w="w-[68px]">Hide Layers</Tx>
            <Tx w="w-[76px]">Isolate Layers</Tx>
            <Tx off w="w-[93px]">Unisolate Layers</Tx>
            <Tx w="w-[130px]">Interference Checking...</Tx>
          </Seg>
          <Seg w="w-[735px]" lead="w-[9px]">
            <Tx w="w-[132px]">Hydraulic Calculations...</Tx>
            {["chart", "book", "grid", "lasso", "sparkDoc", "boxDot", "panel", "page", "ghost", "docPen", "printer", "block", "win"].map((n) => <Ic key={n} n={n} />)}
          </Seg>
          <Seg w="w-[386px]" lead="w-[10px]">
            <Ic n="elevUp" />
            <Tx w="w-[89px]">Elevate to Pipes</Tx>
            <Tx w="w-[89px]">Elevate Beams...</Tx>
            <Ic n="colors" />
            <Ic n="tagY" />
            <Ic n="tagS" />
          </Seg>
          <Seg w="w-[216px]" lead="w-[9px]">
            <Ic n="beam" />
            <Ic n="star" />
            <Tx w="w-[97px]">Sprinkler Legend</Tx>
          </Seg>
        </div>
      </div>

      <div className="flex h-[803px]">
        <div className="flex w-[1872px] flex-col">
          <div className="flex h-[784px]">
            <div className="flex w-[320px] flex-col pt-px">
              <div className="mr-[2px] flex h-[20px] items-center bg-[#9c9c9c] px-[5px] text-[11px] text-[#3c3c3c]">
                <span>Layers</span>
                <svg className="ml-auto" width="10" height="10" stroke="#444" fill="none" shapeRendering="crispEdges"><path d="M3.5 1.5h4v4h-4zM1.5 5.5h8M5.5 6v4" /></svg>
                <svg className="ml-[7px]" width="9" height="9" stroke="#444"><path d="M1 1l7 7M8 1L1 8" /></svg>
              </div>
              <div className="flex flex-1 flex-col bg-[#e8e8e8] pl-[3px] pr-[4px]">
                <div className={clsx("flex h-[47px] shrink-0 items-center overflow-hidden", barBg)}>
                  <Ic n="layNew" w="w-[48px]" />
                  <Ic n="layDel" w="w-[40px]" />
                  <Sep c="ml-[5px] mr-[3px]" />
                  <Ic n="layE" w="w-[44px]" />
                  <Ic n="layDoc" w="w-[44px]" />
                  <Sep c="ml-[3px] mr-[1px]" />
                  <Ic n="layChk" w="w-[48px]" />
                  <Ic n="layBox" w="w-[18px]" />
                  <Ic n="layTree" w="w-[22px]" />
                  <Sep c="ml-[5px] mr-[2px]" />
                  <Ic n="layOpen" w="w-[30px]" />
                </div>
                <div className="flex h-[19px] shrink-0 items-center border-b border-[#a0a0a0] bg-[#f0f0f0] pt-px text-[11px] text-[#222]">
                  <div className="h-full w-[99px] border-r border-[#ccc] pl-[5px] leading-[18px]">Name</div>
                  <div className="h-full w-[20px] border-r border-[#ccc] text-center leading-[18px]">V.</div>
                  <div className="h-full w-[20px] border-r border-[#ccc] text-center leading-[18px]">S.</div>
                  <div className="h-full w-[20px] border-r border-[#ccc] text-center leading-[18px]">A.</div>
                  <div className="h-full w-[20px] border-r border-[#ccc] text-center leading-[18px]">C.</div>
                  <div className="h-full w-[75px] border-r border-[#ccc] pl-[6px] leading-[18px]">Elements</div>
                </div>
                <div className="flex-1 bg-white">
                  {layers.map((l) => {
                    const child = l.t === "child" || l.t === "last";
                    return (
                      <div key={l.name + l.n + l.t} className="flex h-[17px] items-center text-[12px] leading-none text-[#111]">
                        <TreeLines t={l.t} />
                        <div className={clsx("flex h-full items-center", l.sel && "bg-[#0078d7] text-white", child ? "w-[225px]" : "-ml-[15px] w-[240px]")}>
                          <div className={clsx("whitespace-nowrap pl-[2px]", child ? "w-[68px]" : "w-[83px]")}>{l.name}</div>
                          <div className="flex w-[20px] justify-center"><Eye /></div>
                          <div className="flex w-[20px] justify-center"><Magnet /></div>
                          <div className="w-[21px]" />
                          <div className="flex w-[21px] justify-center"><div className={clsx("h-[15px] w-[18px] border border-[#888]", l.c)} /></div>
                          <div className="pl-[1px]">{l.n}</div>
                        </div>
                      </div>
                    );
                  })}
                </div>
              </div>
              <div className="flex h-[24px] shrink-0 items-start bg-[#535353] pl-[4px] text-[11px] text-[#eee]">
                <div className="flex h-[21px] w-[23px] items-center justify-center rounded-b-[3px] bg-[#f0f0f0] text-[#111]">La...</div>
                {["D...", "Sy...", "Al...", "Se...", "D...", "Te...", "Pa...", "N...", "Tr...", "Fa..."].map((t, i) => (
                  <div key={t + i} className="flex h-[21px] w-[27px] items-center whitespace-nowrap pl-[8px]">{t}</div>
                ))}
              </div>
            </div>

            <div className="flex w-[1552px] flex-col">
              <div className="flex h-[21px] shrink-0 items-center pl-[11px] pt-px text-[11px] text-[#ececec]">
                {docTabs.map(([t, w]) => (
                  <div key={t} className={clsx("shrink-0 whitespace-nowrap", w)}>{t}</div>
                ))}
                <div className="flex h-[20px] w-[175px] items-center self-end rounded-t-[3px] bg-[#f0f0f0] pl-[5px] text-[10.7px] font-semibold text-[#111]">
                  <span className="whitespace-nowrap">Simple Threaded System.cad</span>
                  <svg className="ml-auto mr-[5px]" width="9" height="9" stroke="#555"><path d="M1 1l7 7M8 1L1 8" /></svg>
                </div>
                <div className="ml-auto mr-[8px] flex gap-[10px] text-[#6c6c6c]">
                  <div className="h-0 w-0 border-y-[5px] border-r-[5px] border-y-transparent border-r-[#6c6c6c]" />
                  <div className="h-0 w-0 border-y-[5px] border-l-[5px] border-y-transparent border-l-[#6c6c6c]" />
                </div>
              </div>
              <div className="flex flex-1 flex-col pl-[4px] pr-[2px]">
                <div className="flex flex-1 flex-col border-x border-t border-[#fff] bg-[#efefef] px-[3px] pb-[6px] pt-[3px]">
                  <div className="flex flex-1">
                    <div className="relative h-[717px] flex-1 overflow-hidden border-l border-t border-[#8a8a8a] bg-[#5a5a5a]">
                      <div className="absolute left-[55px] top-[89px] h-[438px] w-[503px] border-2 border-[#222] bg-white font-['Liberation_Sans',sans-serif] text-[#111]">
                        <div className="flex h-[31px] items-center justify-center border-b-2 border-black text-[19px] font-bold [-webkit-text-stroke:0.2px_#000]">Riser Tag</div>
                        {riser.map(([a, b], i) => (
                          <div key={a + i} className="flex h-[20.23px] items-center whitespace-nowrap text-[13.5px] leading-none [-webkit-text-stroke:0.35px_#111]">
                            <div className={clsx("w-[344px]", b ? "pl-[22px]" : "pl-[7px]")}>{a}</div>
                            <div className="mt-px text-[13.8px]">{b}</div>
                          </div>
                        ))}
                      </div>
                      <div className="absolute left-[918px] top-[106px] w-[434px] border-2 border-[#333] font-['Liberation_Sans',sans-serif] text-[#161616]">
                        <div className="flex h-[31px] items-center justify-center text-[18.5px] font-bold">Hydraulic Information</div>
                        {hydraulic.map(([a, b]) => (
                          <div key={a} className="flex h-[20.27px] items-center whitespace-nowrap border-t-2 border-[#2c2c2c] text-[13.1px] leading-none [-webkit-text-stroke:0.45px_#161616]">
                            <div className="flex h-full w-[215px] items-center border-r-2 border-[#2c2c2c] pl-[5px]">{a}</div>
                            <div className="mt-px pl-[5px] text-[13.9px]">{b}</div>
                          </div>
                        ))}
                      </div>
                      <svg className="absolute left-0 top-0" width="1520" height="717" viewBox="328 208 1520 717" fill="none">
                        <path d="M375 298V238H365L386 196 405 238H395V288" stroke="#2f5e2f" strokeWidth="1.2" />
                        <path d="M395 288H446V278L484 298 446 317V308H385" stroke="#a35a5a" strokeWidth="1.2" />
                        <circle cx="385" cy="298" r="10" stroke="#444" strokeWidth="1" />
                        <path d="M385 298V288A10 10 0 0 0 375 298ZM385 298V308A10 10 0 0 0 395 298Z" fill="#000" />
                        <path d="M365 298H405" stroke="#2a2a90" strokeWidth="1.2" />
                        <g transform="translate(900 370) scale(.3333)">
                          <text x="62" y="362" fontSize="37" fontWeight="700" fontFamily="Liberation Sans" fill="#4040ff">Ordinary Group II-0.20 gpm/ft² for 115 ft²</text>
                          <path d="M352 628V65H635M628 65V150M628 380V420M352 628H630" stroke="#4040ff" strokeWidth="10" />
                          <path d="M140 628V375H350V628z" stroke="#4c4c4c" strokeWidth="3" />
                          <g stroke="#4040ff" strokeWidth="2.5">
                            <path d="M530 95L640 170M495 180L601 250M495 370L601 430M495 485L601 590M490 545L601 730M495 230L565 720M413 575L505 920M640 860L675 955M160 570L278 700" />
                          </g>
                          <g fill="#4040ff">
                            {hexes.map(([x, y]) => (
                              <polygon key={`${x}-${y}`} points={`${x - 50},${y} ${x - 25},${y - 50} ${x + 25},${y - 50} ${x + 50},${y} ${x + 25},${y + 50} ${x - 25},${y + 50}`} />
                            ))}
                          </g>
                          <path d="M490 78V538" stroke="#e00000" strokeWidth="7" />
                          <path d="M490 88v14M490 275v14M490 330v14M490 480v8" stroke="#444" strokeWidth="7" />
                          <path d="M476 143l29-29M476 244l29-29M476 438l29-29" stroke="#111" strokeWidth="3" />
                          <rect x="471" y="162" width="36" height="36" fill="#8e8e8e" />
                          <circle cx="489" cy="180" r="11" stroke="#a07070" strokeWidth="1.5" />
                          <rect x="582" y="267" width="36" height="36" fill="#8a8ac4" />
                          <path d="M413 305H565M413 312H565" stroke="#7c3c3c" strokeWidth="4" />
                          <path d="M490 95H518" stroke="#b0a020" strokeWidth="4" />
                          <circle cx="529" cy="95" r="12" stroke="#111" strokeWidth="2.5" />
                          <path d="M495 541H562" stroke="#f000c0" strokeWidth="4" />
                          <circle cx="562" cy="537" r="8" fill="#111" />
                          <path d="M445 470L416 565" stroke="#fff" strokeWidth="3" strokeDasharray="5 4" />
                          <path d="M443 462Q460 482 490 485" stroke="#888" strokeWidth="3" />
                          <circle cx="413" cy="572" r="12" fill="#222" stroke="#000" strokeWidth="3" />
                          <circle cx="413" cy="572" r="4" fill="#ddd" />
                          <g stroke="#9494f2" strokeWidth="3">
                            {Array.from({ length: 26 }, (_, i) => ray(243, 515, 3, 128, i, i * 13.8))}
                            {Array.from({ length: 10 }, (_, i) => ray(243, 515, 3, 128, i + 40, -22 + i * 4.7))}
                            {Array.from({ length: 16 }, (_, i) => ray(167, 530, 10, 118, i, 115 + i * 9))}
                            {Array.from({ length: 12 }, (_, i) => ray(245, 625, 8, 140, i, 62 + i * 5))}
                          </g>
                          <rect x="150" y="354" width="795" height="20" fill="#3c3c3c" />
                          <rect x="150" y="354" width="795" height="5" fill="#5f5f5f" />
                          <rect x="158" y="380" width="20" height="150" fill="#3c3c3c" />
                          <path d="M145 352H190V376L178 386H156L145 376z" fill="#e88a10" stroke="#a85e00" strokeWidth="2" />
                          <rect x="153" y="520" width="28" height="30" rx="8" fill="#e88a10" />
                          <path d="M918 351V381M942 351V381" stroke="#e88a10" strokeWidth="6" />
                          <rect x="157" y="563" width="22" height="14" fill="#a01830" />
                          <path d="M204 550V590" stroke="#e02020" strokeWidth="5" />
                          <path d="M243 560V600" stroke="#40b060" strokeWidth="5" />
                          <path d="M243 600V616" stroke="#fff" strokeWidth="3" />
                          <path d="M190 538H222" stroke="#f2d020" strokeWidth="4" />
                        </g>
                      </svg>
                    </div>
                    <div className="relative w-[18px] bg-[#f0f0f0]">
                      <div className="absolute left-[8px] top-[446px] h-[14px] w-[2px] bg-[#777]" />
                    </div>
                  </div>
                  <div className="flex h-[17px] shrink-0 items-center bg-[#f0f0f0] pl-[346px]">
                    <div className="h-[2px] w-[17px] bg-[#888]" />
                  </div>
                  <div className="mr-[18px] flex h-[18px] shrink-0 items-end bg-linear-to-b from-[#4f4f4f] to-[#808080] pl-[2px] text-[11px]">
                    <div className="mb-[2px] flex gap-[2px]">
                      <NavBtn d="M0 0h1v8H0zM8 0v8L2 4z" />
                      <NavBtn d="M7 0v8L1 4z" />
                      <NavBtn d="M1 0v8l6-4z" />
                      <NavBtn d="M0 0v8l6-4zM7 0h1v8H7z" />
                    </div>
                    <div className="ml-[5px] flex h-[17px] w-[47px] items-center justify-center bg-[#f0f0f0] font-semibold text-[#111] [clip-path:polygon(0_0,100%_0,88%_100%,0_100%)]">*Model</div>
                    <div className="ml-[1px] flex h-[17px] w-[58px] items-center justify-center bg-[#d8d8d8] text-[#111] [clip-path:polygon(14%_0,100%_0,84%_100%,0_100%)]">Sheet 1</div>
                  </div>
                </div>
              </div>
            </div>
          </div>
          <div className="flex h-[19px] flex-col">
            <div className="h-[7px] bg-[#3f4148]" />
            <div className="flex h-[12px] items-center bg-[#363636] pl-[4px] text-[10.5px] leading-none text-[#eee]">
              <span>For Help, press F1</span>
              <div className="ml-auto flex h-full items-center whitespace-nowrap pr-[2px]">
                <div className="flex w-[88px] justify-center border-l border-[#666]">-70'-8, 28'-11½</div>
                <div className="flex w-[58px] justify-center border-l border-[#666]">Elev1: 2'-3</div>
                <div className="flex w-[127px] justify-center border-l border-[#666]">A:-7'-9½, -24'-10½, 2'-3</div>
                <div className="flex w-[37px] justify-center border-l border-[#666]"># Off</div>
                <div className="flex w-[27px] justify-center border-l border-[#666]">Foot</div>
              </div>
            </div>
          </div>
        </div>

        <div className="flex w-[48px] flex-col">
          <div className={clsx("flex h-[211px] flex-col items-center rounded-t-[3px]", vBarBg)}>
            <div className="mt-[5px] w-[32px] border-t-2 border-dotted border-[#444]" />
            <div className="mt-[7px] h-[66px] whitespace-nowrap text-[11.5px] leading-none text-[#1c1c1c] [writing-mode:vertical-rl]">Import DWG</div>
            <div className="mt-[7px] flex flex-col gap-[9px]">
              <S>{icons.vBlue}</S>
              <S>{icons.vDocs}</S>
              <S>{icons.vLink}</S>
            </div>
          </div>
          <VGrip h="h-[23px]" />
          <div className={clsx("flex h-[278px] flex-col items-center", vBarBg)}>
            <div className="mt-[5px] w-[32px] border-t-2 border-dotted border-[#444]" />
            <div className="mt-[9px]"><S>{icons.vRoof}</S></div>
            <div className="mt-[9px]"><S>{icons.vRoofW}</S></div>
            <div className="mt-[9px] h-px w-[28px] bg-white" />
            <div className="mt-[1px]"><S>{icons.vPeak}</S></div>
            <div className="mt-[20px]"><S>{icons.vPeak2}</S></div>
            <div className="mt-[6px] h-px w-[28px] bg-white" />
            <div className="mt-[8px]"><S>{icons.vWiz}</S></div>
            <div className="mt-[9px]"><S>{icons.vLoop}</S></div>
          </div>
          <VGrip h="h-[22px]" />
          <div className={clsx("flex h-[241px] flex-col items-center", vBarBg)}>
            <div className="mt-[5px] w-[32px] border-t-2 border-dotted border-[#444]" />
            <div className="mt-[7px] h-[27px] text-[11.5px] leading-none text-[#1c1c1c] [writing-mode:vertical-rl]">GLSL</div>
            <div className={clsx("mt-[8px] flex h-[62px] w-[43px] items-center justify-center text-[11.5px] leading-none text-[#1c1c1c] [writing-mode:vertical-rl]", hlBg)}>OpenGL®</div>
            <div className="mt-[10px] flex flex-col gap-[9px]">
              <S>{icons.vMon}</S>
              <S>{icons.vMonG}</S>
              <S>{icons.layDoc}</S>
            </div>
          </div>
          <VGrip h="h-[22px]" />
        </div>
      </div>

      <div className="flex h-[46px]">
        <Seg w="w-[628px]" lead="w-[9px]" grip="w-[20px]">
          <Tx w="w-[71px]">Reset Panes</Tx>
          <Ic n="reset" />
          <Hl w="w-[40px]">Layers</Hl>
          <Hl w="w-[65px] ml-px">Parts Picker</Hl>
          <Hl w="w-[37px] ml-[2px]">Alerts</Hl>
          <Hl w="w-[37px] ml-px">Select</Hl>
          <Hl w="w-[51px] ml-px">Symbols</Hl>
          <Ic n="arL" />
          <Tx w="w-[14px]">-Y</Tx>
          <Ic n="arU" />
          <Tx w="w-[19px]">+X</Tx>
          <Ic n="arR" />
          <Tx w="w-[20px]">+Y</Tx>
          <Ic n="arD" />
          <Tx w="w-[14px]">-X</Tx>
        </Seg>
        <Seg w="w-[141px]" lead="w-[11px]" grip="w-[20px]">
          <Ic n="arB" w="w-[36px]" />
          <div className="ml-[9px] flex h-[15px] w-[61px] items-center bg-white text-[11px] leading-none text-white">
            <span className="flex h-full w-[22px] items-center justify-center bg-[#0078d7]">,,11</span>
          </div>
        </Seg>
        <Seg w="w-[1082px]" lead="w-[10px]" grip="w-[19px]">
          {["undoH", "dots", "checks", "sparkPtr", "winRing"].map((n) => <Ic key={n} n={n} />)}
          <Hl w="w-[86px]">Lock On Target</Hl>
          {["zoomUp", "zoomDn", "pU", "pL", "pUndo", "pD", "pR", "pRedo", "rotA", "rotB", "hA", "hB", "hC", "hD", "fit", "diamond"].map((n) => <Ic key={n} n={n} />)}
          <div className={clsx("ml-px flex h-[40px] w-[42px] shrink-0 items-center justify-center", hlBg)}><S>{icons.sheets}</S></div>
        </Seg>
      </div>
    </div>
  );
}
